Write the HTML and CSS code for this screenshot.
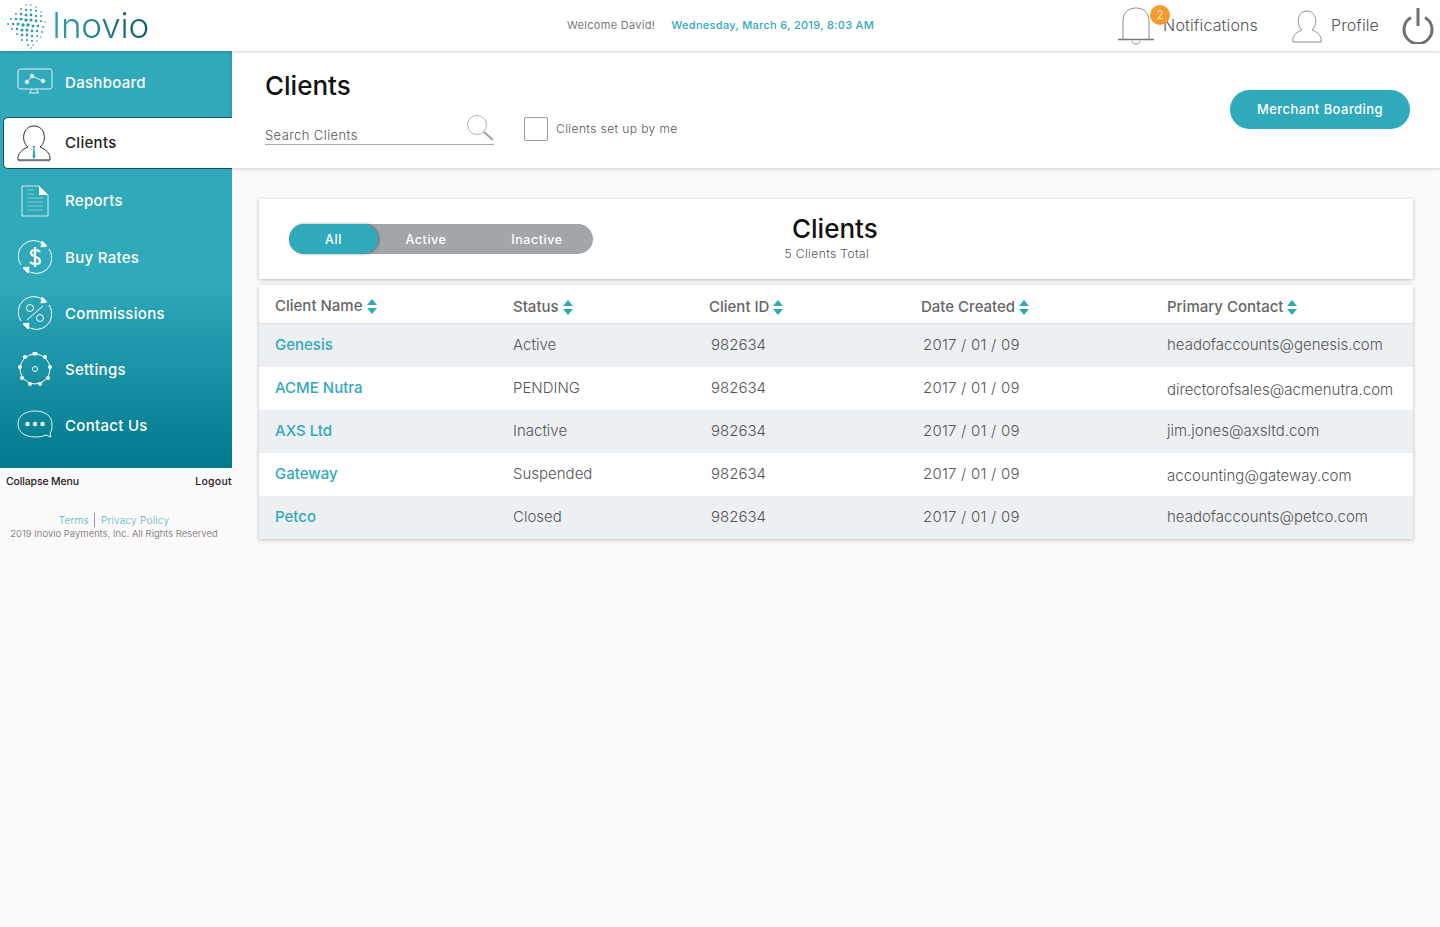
FILE: index.html
```html
<!DOCTYPE html>
<html lang="en">
<head>
  <meta charset="UTF-8" />
  <title>Inovio - Clients</title>
  <link rel="stylesheet" href="styles.css">
</head>
<body>

  <header class="topbar">
    <div class="logo">
      <svg class="logo-mark" width="40" height="46" viewBox="0 0 40 46" fill="#2f9aa8">
        <circle cx="19" cy="2" r=".8"/><circle cx="24" cy="2" r=".8"/><circle cx="29" cy="4" r=".8"/>
        <circle cx="14" cy="6" r="1"/><circle cx="19" cy="7" r="1.2"/><circle cx="24" cy="7" r="1.1"/><circle cx="29" cy="8" r="1"/><circle cx="34" cy="9" r=".8"/>
        <circle cx="9" cy="11" r="1"/><circle cx="14" cy="11" r="1.3"/><circle cx="19" cy="12" r="1.5"/><circle cx="24" cy="12" r="1.4"/><circle cx="29" cy="13" r="1.2"/><circle cx="34" cy="13" r="1"/>
        <circle cx="4" cy="16" r="1"/><circle cx="9" cy="16" r="1.3"/><circle cx="14" cy="16" r="1.6"/><circle cx="19" cy="17" r="1.7"/><circle cx="24" cy="17" r="1.6"/><circle cx="29" cy="18" r="1.4"/><circle cx="34" cy="18" r="1.1"/><circle cx="38" cy="19" r=".8"/>
        <circle cx="1" cy="21" r=".9"/><circle cx="6" cy="21" r="1.2"/><circle cx="11" cy="21" r="1.5"/><circle cx="16" cy="22" r="1.7"/><circle cx="21" cy="22" r="1.7"/><circle cx="26" cy="23" r="1.5"/><circle cx="31" cy="23" r="1.3"/><circle cx="36" cy="24" r=".9"/>
        <circle cx="5" cy="26" r="1"/><circle cx="10" cy="26" r="1.3"/><circle cx="15" cy="27" r="1.6"/><circle cx="20" cy="27" r="1.6"/><circle cx="25" cy="28" r="1.4"/><circle cx="30" cy="28" r="1.2"/><circle cx="35" cy="29" r=".9"/>
        <circle cx="10" cy="31" r="1"/><circle cx="15" cy="32" r="1.3"/><circle cx="20" cy="32" r="1.4"/><circle cx="25" cy="33" r="1.2"/><circle cx="30" cy="33" r="1"/><circle cx="34" cy="34" r=".8"/>
        <circle cx="15" cy="37" r="1"/><circle cx="20" cy="37" r="1.1"/><circle cx="25" cy="38" r="1"/><circle cx="30" cy="38" r=".8"/>
        <circle cx="21" cy="42" r=".9"/><circle cx="26" cy="42" r=".8"/><circle cx="24" cy="45" r=".8"/>
      </svg>
      <span class="logo-text">Inovio</span>
    </div>
    <div class="welcome">
      <span>Welcome David!</span>
      <span class="today">Wednesday, March 6, 2019, 8:03 AM</span>
    </div>
    <div class="top-actions">
      <div class="notif">
        <svg width="38" height="40" viewBox="0 0 38 40" fill="none" stroke="#8b8e90" stroke-width="1">
          <path d="M6 33V15C6 7 11 2 19 2s13 5 13 13v18"/>
          <path d="M1 33.5h36" stroke="#77797b" stroke-width="1.5"/>
          <path d="M15 35c0 4 8 4 8 0"/>
        </svg>
        <span class="badge">2</span>
        <span class="notif-label">Notifications</span>
      </div>
      <div class="profile">
        <svg width="30" height="34" viewBox="0 0 30 34" fill="none" stroke="#8b8e90" stroke-width="1">
          <path d="M1 33c-1-7 4-10 9-12-6-5-5-19 5-19s11 14 5 19c5 2 10 5 9 12z"/>
        </svg>
        <span>Profile</span>
      </div>
      <svg class="power" width="32" height="37" viewBox="0 0 32 37" fill="none" stroke="#6f7173" stroke-width="3">
        <path d="M9 10.500a14 14 0 1 0 14 0"/>
        <path d="M16 1v18"/>
      </svg>
    </div>
  </header>

  <div class="page">
    <aside class="side">
      <nav class="menu">
        <a class="menu-item">
          <svg width="36" height="28" viewBox="0 0 36 28" fill="none" stroke="#e4f4f6" stroke-width="1">
            <rect x="1" y="1" width="34" height="20" rx="2.5"/>
            <path d="M15 21l-2.500 4h9l-2.500-4M10 14l5-6 11 5" />
            <circle cx="10" cy="14" r="1.800" fill="#fff"/><circle cx="15" cy="8" r="1.800" fill="#fff"/><circle cx="26" cy="13" r="1.800" fill="#fff"/>
          </svg>
          <span>Dashboard</span>
        </a>
        <a class="menu-item active">
          <svg width="34" height="38" viewBox="0 0 34 38" fill="none" stroke="#2b2b2b" stroke-width="1">
            <path d="M1 36c-1-7 5-11 10-13-7-5-6-21 6-21s13 16 6 21c5 2 11 6 10 13z"/>
            <path d="M1 36.500h32" stroke="#777" stroke-width="1.500"/>
            <path d="M15.500 22h3l-1 2 1 9-1.500 2-1.500-2 1-9z" fill="#2fa9bb" stroke="none"/>
          </svg>
          <span>Clients</span>
        </a>
        <a class="menu-item reports">
          <svg width="28" height="32" viewBox="0 0 28 32" fill="none" stroke="#d5eef2" stroke-width="1">
            <path d="M1 1h17l9 9v21H1z"/>
            <path d="M18 1l9 9h-9z" fill="#fff" stroke="none"/>
            <path d="M6 5h7M6 9h7M6 13h16M6 17h16M6 21h16M6 25h16" stroke-opacity=".5"/>
          </svg>
          <span>Reports</span>
        </a>
        <a class="menu-item">
          <svg width="34" height="34" viewBox="0 0 34 34" fill="none" stroke="#fff" stroke-width="1">
            <path d="M26 4.500A15.500 15.500 0 0 0 3 25M8 29.500A15.500 15.500 0 0 0 31 9"/>
            <path d="M24 1l5 5-6 1zM10 33l-5-5 6-1z" fill="#fff"/>
            <path d="M22 12c-2-3-9-3-9 1 0 4 9 3 9 8 0 4-7 4-10 1M17 7v20" stroke-width="2.200"/>
          </svg>
          <span>Buy Rates</span>
        </a>
        <a class="menu-item">
          <svg width="34" height="34" viewBox="0 0 34 34" fill="none" stroke="#fff" stroke-width="1">
            <path d="M26 4.500A15.500 15.500 0 0 0 3 25M8 29.500A15.500 15.500 0 0 0 31 9"/>
            <path d="M24 1l5 5-6 1zM10 33l-5-5 6-1z" fill="#fff"/>
            <circle cx="12" cy="12" r="3.500"/><circle cx="22" cy="22" r="3.500"/><path d="M9 24L25 10"/>
          </svg>
          <span>Commissions</span>
        </a>
        <a class="menu-item">
          <svg width="34" height="34" viewBox="0 0 34 34" fill="none" stroke="#fff" stroke-width="1">
            <circle cx="17" cy="17" r="15"/>
            <circle cx="17" cy="17" r="2.500"/>
            <g fill="#fff" stroke="none">
              <rect x="14.500" y="0" width="5" height="3.500" rx="1"/>
              <circle cx="27" cy="5" r="2"/><circle cx="32" cy="15" r="2"/><circle cx="30" cy="26" r="2"/><circle cx="22" cy="32" r="2"/>
              <circle cx="12" cy="32" r="2"/><circle cx="4" cy="26" r="2"/><circle cx="2" cy="15" r="2"/><circle cx="7" cy="5" r="2"/>
            </g>
          </svg>
          <span>Settings</span>
        </a>
        <a class="menu-item">
          <svg width="36" height="30" viewBox="0 0 36 30" fill="none" stroke="#e4f4f6" stroke-width="1">
            <path d="M18 1C8 1 1 6 1 14s7 13 17 13c4 0 8-.5 11-2l5 2-1-4c2-2 2-6 2-9C35 6 28 1 18 1z"/>
            <circle cx="10.500" cy="14" r="2.200" fill="#fff" stroke="none"/><circle cx="18" cy="14" r="2.200" fill="#fff" stroke="none"/><circle cx="25.500" cy="14" r="2.200" fill="#fff" stroke="none"/>
          </svg>
          <span>Contact Us</span>
        </a>
      </nav>
      <div class="side-links">
        <span class="collapse">Collapse Menu</span>
        <span class="logout">Logout</span>
      </div>
      <div class="legal">
        <div class="legal-links"><span>Terms</span><span class="legal-sep">Privacy Policy</span></div>
        <div>2019 Inovio Payments, Inc. All Rights Reserved</div>
      </div>
    </aside>

    <main class="main">
      <section class="subhead">
        <div class="subhead-left">
          <h1>Clients</h1>
          <div class="filters">
            <div class="search">
              <span>Search Clients</span>
              <svg width="28" height="26" viewBox="0 0 28 26" fill="none" stroke="#b4b6b8">
                <circle cx="11" cy="10" r="9.500"/>
                <path d="M18 17l9 8" stroke="#9c9ea0" stroke-width="2"/>
              </svg>
            </div>
            <label class="check"><span class="box"></span><span class="check-text">Clients set up by me</span></label>
          </div>
        </div>
        <button class="btn">Merchant Boarding</button>
      </section>

      <section class="content">
        <div class="card summary">
          <div class="tabs">
            <span class="tab on">All</span>
            <span class="tab tab-active">Active</span>
            <span class="tab tab-inactive">Inactive</span>
          </div>
          <div class="summary-title">
            <h2>Clients</h2>
            <p>5 Clients Total</p>
          </div>
        </div>

        <div class="card table">
          <div class="row head">
            <div class="first">Client Name <i class="sort"></i></div>
            <div>Status <i class="sort"></i></div>
            <div class="shift">Client ID <i class="sort"></i></div>
            <div class="shift">Date Created <i class="sort"></i></div>
            <div>Primary Contact <i class="sort"></i></div>
          </div>
          <div class="row">
            <a>Genesis</a><div>Active</div><div>982634</div><div class="date">2017 / 01 / 09</div><div>headofaccounts@genesis.com</div>
          </div>
          <div class="row">
            <a>ACME Nutra</a><div>PENDING</div><div>982634</div><div class="date">2017 / 01 / 09</div><div class="low">directorofsales@acmenutra.com</div>
          </div>
          <div class="row">
            <a>AXS Ltd</a><div>Inactive</div><div>982634</div><div class="date">2017 / 01 / 09</div><div>jim.jones@axsltd.com</div>
          </div>
          <div class="row">
            <a>Gateway</a><div>Suspended</div><div>982634</div><div class="date">2017 / 01 / 09</div><div class="low">accounting@gateway.com</div>
          </div>
          <div class="row">
            <a>Petco</a><div>Closed</div><div>982634</div><div class="date">2017 / 01 / 09</div><div>headofaccounts@petco.com</div>
          </div>
        </div>
      </section>
    </main>
  </div>

</body>
</html>
```

FILE: styles.css
```css
* {
  box-sizing: border-box;
}
html, body {
  height: 100%;
}
body {
  margin: 0;
  background: #fbf9fa;
  font-family: "Inter", "Noto Sans", sans-serif;
  color: #666;
  overflow: hidden;
}
.topbar {
  height: 51px;
  background: #fff;
  display: flex;
  align-items: center;
  box-shadow: 0 1px 3px rgba(0,0,0,0.18);
  position: relative;
  z-index: 3;
}
.logo {
  width: 232px;
  padding-left: 7px;
  display: flex;
  align-items: center;
  gap: 5px;
}
.logo-mark {
  flex: none;
}
.logo-text {
  font-size: 35px;
  font-weight: 300;
  letter-spacing: -0.2px;
  line-height: 44px;
  margin-top: -2px;
  background: linear-gradient(90deg, #2f9fb2, #0f5965);
  -webkit-background-clip: text;
  background-clip: text;
  color: transparent;
}
.welcome {
  margin: -2px 0 0 335px;
  font-size: 11px;
  color: #777;
  display: flex;
  gap: 16px;
  letter-spacing: .3px;
}
.today {
  color: #2fa9bb;
  font-weight: 500;
}
.top-actions {
  margin-left: auto;
  display: flex;
  align-items: center;
  padding-right: 6px;
  font-size: 16px;
  font-weight: 300;
  color: #555;
}
.notif {
  position: relative;
  display: flex;
  align-items: center;
  height: 44px;
}
.notif-label {
  margin: -1px 0 0 8px;
  letter-spacing: .15px;
}
.badge {
  position: absolute;
  left: 33px;
  top: 1px;
  width: 20px;
  height: 20px;
  border-radius: 50%;
  background: #f79a2e;
  color: #fff;
  font-size: 11px;
  text-align: center;
  line-height: 20px;
}
.profile {
  display: flex;
  align-items: center;
  gap: 9px;
  margin-left: 34px;
}
.profile span {
  margin-top: -2px;
  letter-spacing: .1px;
}
.power {
  margin-left: 23px;
}
.page {
  display: grid;
  grid-template-columns: 232px 1fr;
  height: calc(100% - 51px);
}
.side {
  display: flex;
  flex-direction: column;
}
.menu {
  height: 417px;
  padding-top: 3px;
  background: linear-gradient(#30a9bb 0%, #30a9bb 55%, #02788c 100%);
}
.menu-item {
  height: 56px;
  display: flex;
  align-items: center;
  padding-left: 65px;
  position: relative;
  color: #fff;
  font-size: 15px;
  font-weight: 500;
  letter-spacing: .3px;
}
.menu-item svg {
  position: absolute;
  left: 35px;
  top: 50%;
  transform: translate(-50%, -50%);
}
.menu-item.active {
  margin: 7px 0 3px 3px;
  height: 52px;
  padding: 0 0 2px 61px;
  background: #fff;
  color: #222;
  border: 1px solid #17505e;
  border-right: 0;
  border-radius: 5px 0 0 5px;
}
.menu-item.active svg {
  left: 30px;
}
.menu-item.reports {
  height: 57px;
}
.side-links {
  display: flex;
  justify-content: space-between;
  padding: 7px 0 0 6px;
  font-size: 10.5px;
  font-weight: 500;
  color: #222;
}
.collapse {
  letter-spacing: -.15px;
}
.logout {
  letter-spacing: .3px;
}
.legal {
  margin-top: 25px;
  text-align: center;
  font-size: 9.5px;
  font-weight: 300;
  color: #666;
  padding-right: 4px;
  line-height: 14px;
  letter-spacing: .04px;
}
.legal-links {
  color: #4fb4c4;
  display: flex;
  justify-content: center;
  font-size: 10px;
  letter-spacing: .25px;
}
.legal-sep {
  border-left: 1px solid #999;
  margin-left: 5px;
  padding-left: 6px;
}
.main {
  min-width: 0;
}
.subhead {
  height: 117px;
  background: #fff;
  box-shadow: 0 1px 3px rgba(0,0,0,0.18);
  display: flex;
  justify-content: space-between;
  padding: 19px 30px 0 33px;
}
h1 {
  margin: 0;
  font-size: 26px;
  font-weight: 500;
  line-height: 32px;
  color: #111;
}
.filters {
  display: flex;
  align-items: flex-end;
  margin-top: 13px;
  gap: 30px;
}
.search {
  width: 229px;
  height: 30px;
  border-bottom: 1px solid #aaa;
  display: flex;
  justify-content: space-between;
  align-items: flex-end;
  font-size: 13px;
  font-weight: 300;
  color: #555;
  letter-spacing: .4px;
  padding-bottom: 1px;
}
.search svg {
  margin-bottom: 2px;
}
.check {
  display: flex;
  align-items: center;
  gap: 8px;
  margin-bottom: 4px;
  font-size: 12px;
  font-weight: 300;
  color: #555;
  letter-spacing: .4px;
}
.check-text {
  margin-top: -2px;
}
.box {
  width: 24px;
  height: 24px;
  border: 1px solid #999;
  border-radius: 2px;
}
.btn {
  margin-top: 20px;
  width: 180px;
  height: 39px;
  border: 0;
  border-radius: 20px;
  background: #30a9bb;
  color: #fff;
  font: 500 13px "Inter", sans-serif;
  letter-spacing: .45px;
  padding-bottom: 2px;
}
.content {
  padding: 31px 27px 0 27px;
}
.card {
  background: #fff;
  box-shadow: 0 1px 4px rgba(0,0,0,0.25);
}
.summary {
  height: 80px;
  display: flex;
  padding: 25px 0 0 30px;
  position: relative;
}
.tabs {
  width: 304px;
  height: 30px;
  border-radius: 15px;
  background: #a1a6aa;
  display: flex;
  color: #fff;
  font-size: 12.5px;
  font-weight: 500;
  line-height: 31px;
  letter-spacing: .55px;
}
.tab {
  flex: none;
  text-align: center;
}
.tab.on {
  width: 89px;
  background: #30a9bb;
  border-radius: 15px;
  box-shadow: 1px 0 3px rgba(0,0,0,0.4);
}
.tab-active {
  width: 96px;
}
.tab-inactive {
  width: 119px;
  padding-left: 7px;
}
.summary-title {
  margin-left: 191px;
  margin-top: -10px;
  text-align: center;
}
h2 {
  margin: 0 0 0 8px;
  font-size: 26px;
  font-weight: 500;
  line-height: 30px;
  color: #111;
}
.summary-title p {
  margin: 2px 0 0;
  padding-right: 8px;
  font-size: 12px;
  font-weight: 300;
  color: #555;
  letter-spacing: .4px;
}
.table {
  margin-top: 6px;
}
.row {
  display: grid;
  grid-template-columns: 238px 198px 212px 244px 1fr;
  height: 43px;
  padding: 0 0 2px 16px;
  align-items: center;
  font-size: 15px;
  font-weight: 300;
  color: #555;
}
.row:nth-child(even) {
  background: #ecf0f2;
}
.row a {
  color: #30a9bb;
  font-weight: 500;
}
.row .low {
  padding-top: 4px;
}
.row .date {
  letter-spacing: .22px;
}
.row.head {
  height: 39px;
  padding: 5px 0 0 16px;
  border-bottom: 1px solid #d8dcde;
  font-weight: 500;
  color: #666;
}
.head .first {
  margin-top: -2px;
}
.head .shift {
  margin-left: -2px;
}
.sort {
  display: inline-block;
  width: 10px;
  height: 15px;
  vertical-align: -3px;
  position: relative;
}
.sort::before,
.sort::after {
  content: "";
  position: absolute;
  left: 0;
  border-left: 5px solid transparent;
  border-right: 5px solid transparent;
}
.sort::before {
  top: 0;
  border-bottom: 6px solid #30a9bb;
}
.sort::after {
  bottom: 0;
  border-top: 6px solid #30a9bb;
}
```
